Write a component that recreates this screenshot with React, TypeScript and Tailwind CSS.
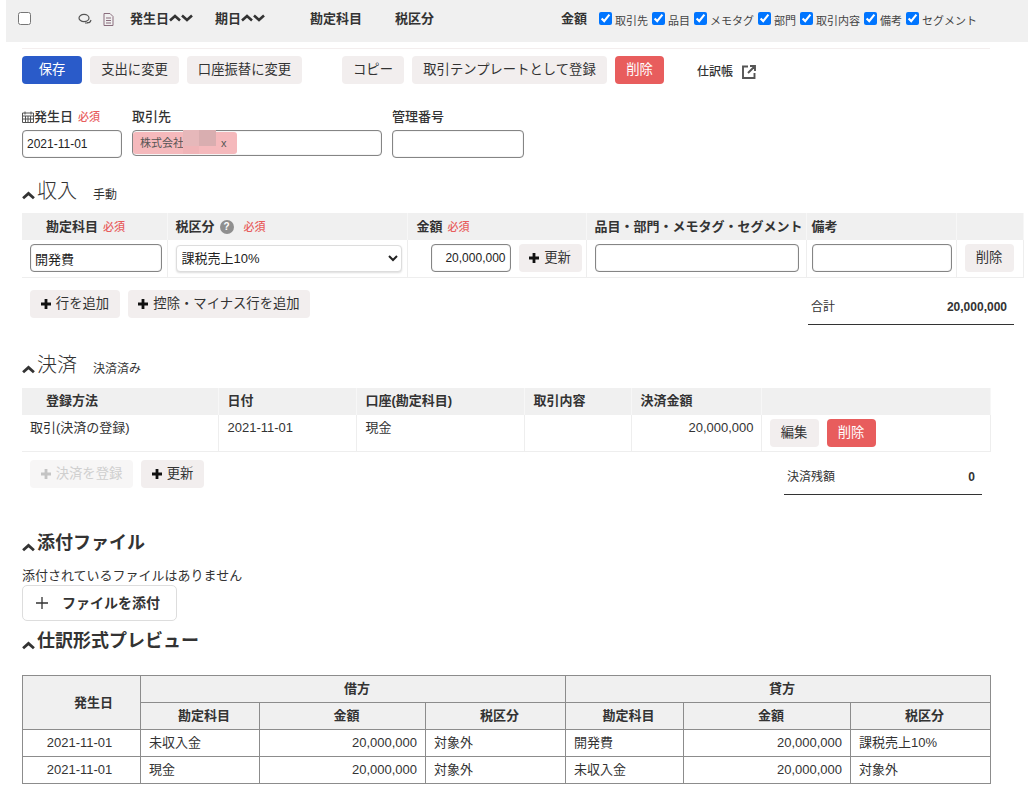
import React from "react";

function Up({ className = "" }: { className?: string }) {
  return (
    <svg viewBox="0 0 12 8" className={className} fill="none" stroke="currentColor" strokeWidth="2.6">
      <path d="M1 6.5 L6 2 L11 6.5" />
    </svg>
  );
}
function Down({ className = "" }: { className?: string }) {
  return (
    <svg viewBox="0 0 12 8" className={className} fill="none" stroke="currentColor" strokeWidth="2.6">
      <path d="M1 1.5 L6 6 L11 1.5" />
    </svg>
  );
}
function Plus({ light = false }: { light?: boolean }) {
  return (
    <svg viewBox="0 0 10 10" className="w-[10px] h-[10px] mr-[5px] shrink-0" fill={light ? "#c4c4c4" : "#111"}>
      <path d="M3.6 0h2.8v3.6H10v2.8H6.4V10H3.6V6.4H0V3.6h3.6z" />
    </svg>
  );
}
function Must({ className = "" }: { className?: string }) {
  return <span className={`text-[11px] font-medium text-[#e85d5d] ${className}`}>必須</span>;
}
function Btn({ children, className = "" }: { children: React.ReactNode; className?: string }) {
  return (
    <button className={`h-[28px] px-[11px] rounded-[4px] bg-[#f2eeee] text-[#333] text-[13.33px] inline-flex items-center justify-center whitespace-nowrap ${className}`}>
      {children}
    </button>
  );
}
function Section({ title, note, noteClass = "", bold = false, className = "" }: { title: string; note?: string; noteClass?: string; bold?: boolean; className?: string }) {
  return (
    <div className={`flex items-center text-[#333] ${className}`}>
      <Up className={`w-[13px] h-[9px] mr-[2px] ${bold ? "mt-[8px]" : "mt-[9px]"}`} />
      <span className={bold ? "text-[18px] font-bold leading-[26px]" : "text-[20px] font-light leading-[26px]"}>{title}</span>
      {note && <span className={`text-[12px] ml-[16px] ${noteClass}`}>{note}</span>}
    </div>
  );
}
const inputCls = "border border-[#858585] rounded-[4px] bg-white shadow-[inset_0_0_1px_#999] outline-none text-[#222]";

function Check({ label }: { label: string }) {
  return (
    <label className="inline-flex items-start text-[11px] text-[#444] mr-[4px]">
      <input type="checkbox" defaultChecked className="w-[13px] h-[13px] mt-[1px] mr-[3px]" />
      <span className="mt-[2px]">{label}</span>
    </label>
  );
}

const th = "bg-[#f0f0f0] text-[13px] font-bold text-[#333] text-left h-[27px] border-r border-[#f7f7f7] px-[8px]";
const td = "text-[13px] text-[#333] border-b border-r border-[#eeeeee] px-[8px]";
const jb = "border border-[#8c8c8c] bg-[#f0f0f0] text-[13px] font-bold text-[#333] text-center h-[27px] pl-[8px]";
const jd = "border border-[#8c8c8c] text-[13px] text-[#333] h-[27px] px-[8px]";
const labelRow = "h-[22px] pb-[4px] flex items-center font-medium";

export default function App() {
  return (
    <div className="w-[1028px] h-[803px] overflow-hidden bg-white text-[#333]" style={{ fontFamily: '"Liberation Sans","Noto Sans CJK JP",sans-serif' }}>
      {/* top bar */}
      <div className="ml-[6px] h-[42px] bg-[#f0f0f0] flex items-start pt-[11px] text-[13px] font-bold">
        <input type="checkbox" className="w-[13px] h-[13px] ml-[12px] mt-[1px]" />
        <svg viewBox="0 0 14 12" className="w-[14px] h-[12px] ml-[47px] mt-[2px]" fill="none" stroke="#555" strokeWidth="1.2">
          <ellipse cx="6" cy="5" rx="5" ry="3.6" />
          <path d="M9 9.5 q3 1 4-2.5 M7 10 h3" />
        </svg>
        <svg viewBox="0 0 11 13" className="w-[11px] h-[13px] ml-[11px] mt-[2px]" fill="none" stroke="#8a6d7d" strokeWidth="1">
          <path d="M1 .5h6l3 3v9H1z M3 5h5 M3 7.5h5 M3 10h5" />
        </svg>
        <span className="ml-[16px] -mt-[2px]">発生日</span>
        <Up className="w-[12px] h-[8px] mt-[3px]" />
        <Down className="w-[12px] h-[8px] mt-[3px]" />
        <span className="ml-[22px] -mt-[2px]">期日</span>
        <Up className="w-[12px] h-[8px] mt-[3px]" />
        <Down className="w-[12px] h-[8px] mt-[3px]" />
        <span className="ml-[45px] -mt-[2px]">勘定科目</span>
        <span className="ml-[33px] -mt-[2px]">税区分</span>
        <span className="ml-[127px] -mt-[2px]">金額</span>
        <div className="ml-[12px] flex font-normal">
          <Check label="取引先" />
          <Check label="品目" />
          <Check label="メモタグ" />
          <Check label="部門" />
          <Check label="取引内容" />
          <Check label="備考" />
          <Check label="セグメント" />
        </div>
      </div>

      <div className="pl-[22px]">
        <div className="w-[968px] h-px bg-[#f3eeee] mt-[6px]" />
        {/* actions */}
        <div className="flex items-center mt-[7px]">
          <Btn className="w-[60px] !bg-[#2a5bc9] !text-white">保存</Btn>
          <Btn className="ml-[8px] w-[89px]">支出に変更</Btn>
          <Btn className="ml-[8px] w-[115px]">口座振替に変更</Btn>
          <Btn className="ml-[40px] w-[62px]">コピー</Btn>
          <Btn className="ml-[8px] w-[195px]">取引テンプレートとして登録</Btn>
          <Btn className="ml-[8px] w-[49px] !bg-[#e85d5d] !text-white">削除</Btn>
          <span className="ml-[33px] mt-[3px] text-[12px] font-medium">仕訳帳</span>
          <svg viewBox="0 0 14 14" className="w-[14px] h-[14px] ml-[9px] mt-[3px]" fill="none" stroke="#555" strokeWidth="1.9">
            <path d="M6 1.5H1v11.5h11.5V8 M8 1h5v5 M13 1 6 8" />
          </svg>
        </div>

        {/* form fields */}
        <div className="flex mt-[24px] text-[13px]">
          <div className="w-[100px]">
            <div className={labelRow}>
              <svg viewBox="0 0 12 12" className="w-[12px] h-[12px]" fill="none" stroke="#555" strokeWidth="1">
                <path d="M.5 2h11v9.5H.5z M.5 5h11 M3 .5v3 M9 .5v3 M3.5 5v6.5 M6 5v6.5 M8.5 5v6.5 M.5 8h11" />
              </svg>
              <span>発生日</span>
              <Must className="ml-[5px]" />
            </div>
            <input className={`${inputCls} w-[100px] h-[28px] text-[12px] px-[4px]`} defaultValue="2021-11-01" />
          </div>
          <div className="w-[250px] ml-[10px]">
            <div className={labelRow}>取引先</div>
            <div className={`${inputCls} h-[26px] w-[250px] relative flex items-start pt-[1px]`}>
              <span className="h-[22px] w-[104px] bg-[#f5b9bc] rounded-[3px] flex items-center pl-[7px] text-[11px] text-[#555]">
                株式会社
                <span className="ml-[37px]">x</span>
              </span>
              <span className="absolute left-[50px] top-[-1px] w-[16px] h-[16px] bg-[#e6b8ba]" />
              <span className="absolute left-[66px] top-[-1px] w-[17px] h-[16px] bg-[#d9aeb0]" />
              <span className="absolute left-[50px] top-[15px] w-[16px] h-[8px] bg-[#f0b4b7]" />
            </div>
          </div>
          <div className="w-[132px] ml-[10px]">
            <div className={labelRow}>管理番号</div>
            <input className={`${inputCls} w-[132px] h-[28px]`} />
          </div>
        </div>

        {/* 収入 */}
        <Section title="収入" note="手動" noteClass="mt-[7px]" className="mt-[20px]" />
        <table className="table-fixed border-collapse w-[1001px] mt-[9px]">
          <colgroup>
            <col className="w-[145px]" />
            <col className="w-[240px]" />
            <col className="w-[179px]" />
            <col className="w-[220px]" />
            <col className="w-[150px]" />
            <col className="w-[67px]" />
          </colgroup>
          <thead>
            <tr>
              <th className={`${th} !pl-[24px]`}>勘定科目<Must className="ml-[5px]" /></th>
              <th className={th}>
                <span className="inline-flex items-center">
                  税区分
                  <span className="ml-[5px] w-[14px] h-[14px] rounded-full bg-[#8f8f8f] text-white text-[10px] flex items-center justify-center">?</span>
                  <Must className="ml-[10px] mt-[2px]" />
                </span>
              </th>
              <th className={`${th} !pl-[9px]`}>金額<Must className="ml-[5px]" /></th>
              <th className={th}><span className="whitespace-nowrap">品目・部門・メモタグ・セグメント</span></th>
              <th className={`${th} !pl-[5px]`}>備考</th>
              <th className={th}></th>
            </tr>
          </thead>
          <tbody>
            <tr className="h-[37px]">
              <td className={td}><input className={`${inputCls} w-[132px] h-[28px] px-[4px] text-[13px] block`} defaultValue="開発費" /></td>
              <td className={td}>
                <select className="w-[226px] h-[27px] border border-[#ddd] rounded-[4px] bg-white shadow-[0_1px_2px_#ddd] text-[13px] text-[#222] pl-[1px] block">
                  <option>課税売上10%</option>
                </select>
              </td>
              <td className={`${td} !pr-[4px]`}>
                <div className="flex items-center justify-end">
                  <input className={`${inputCls} w-[80px] h-[28px] text-[12px] text-right px-[4px]`} defaultValue="20,000,000" />
                  <Btn className="ml-[8px] w-[63px] !px-0"><Plus />更新</Btn>
                </div>
              </td>
              <td className={td}><input className={`${inputCls} w-[204px] h-[28px] block`} /></td>
              <td className={`${td} !pl-[5px]`}><input className={`${inputCls} w-[140px] h-[28px] block`} /></td>
              <td className={td}><Btn className="w-[49px] !px-0">削除</Btn></td>
            </tr>
          </tbody>
        </table>

        <div className="flex justify-between items-start w-[992px] mt-[12px]">
          <div className="flex ml-[8px]">
            <Btn className="w-[90px] !px-0"><Plus />行を追加</Btn>
            <Btn className="ml-[8px] w-[182px] !px-0"><Plus />控除・マイナス行を追加</Btn>
          </div>
          <div className="w-[206px] h-[35px] border-b border-[#333] flex items-center justify-between pl-[3px] pr-[7px] text-[12px] pt-[1px]">
            <span>合計</span>
            <span className="font-bold">20,000,000</span>
          </div>
        </div>

        {/* 決済 */}
        <Section title="決済" note="決済済み" noteClass="mt-[8px]" className="mt-[27px]" />
        <table className="table-fixed border-collapse w-[968px] mt-[10px]">
          <colgroup>
            <col className="w-[196px]" />
            <col className="w-[138px]" />
            <col className="w-[168px]" />
            <col className="w-[107px]" />
            <col className="w-[130px]" />
            <col className="w-[229px]" />
          </colgroup>
          <thead>
            <tr>
              <th className={`${th} !pl-[24px]`}>登録方法</th>
              <th className={`${th} !pl-[9px]`}>日付</th>
              <th className={`${th} !pl-[9px]`}>口座(勘定科目)</th>
              <th className={`${th} !pl-[9px]`}>取引内容</th>
              <th className={`${th} !pl-[9px]`}>決済金額</th>
              <th className={th}></th>
            </tr>
          </thead>
          <tbody>
            <tr className="h-[37px]">
              <td className={`${td} align-top pt-[3px]`}>取引(決済の登録)</td>
              <td className={`${td} align-top pt-[3px] !pl-[9px]`}>2021-11-01</td>
              <td className={`${td} align-top pt-[3px] !pl-[9px]`}>現金</td>
              <td className={td}></td>
              <td className={`${td} align-top pt-[3px] text-right !pr-[7px]`}>20,000,000</td>
              <td className={`${td} align-top pt-[4px]`}>
                <div className="flex">
                  <Btn className="w-[49px] !px-0">編集</Btn>
                  <Btn className="ml-[8px] w-[49px] !px-0 !bg-[#e85d5d] !text-white">削除</Btn>
                </div>
              </td>
            </tr>
          </tbody>
        </table>

        <div className="flex justify-between items-start w-[960px] mt-[8px]">
          <div className="flex ml-[8px]">
            <Btn className="w-[103px] !px-0 !bg-[#f7f6f6] !text-[#cfcfcf]"><Plus light />決済を登録</Btn>
            <Btn className="ml-[8px] w-[63px] !px-0"><Plus />更新</Btn>
          </div>
          <div className="w-[198px] h-[35px] border-b border-[#333] flex items-center justify-between pl-[3px] pr-[7px] text-[12px]">
            <span>決済残額</span>
            <span className="font-bold">0</span>
          </div>
        </div>

        {/* 添付 */}
        <Section title="添付ファイル" bold className="mt-[35px]" />
        <div className="text-[13px] leading-[18px] mt-[11px]">添付されているファイルはありません</div>
        <button className="w-[155px] h-[36px] border border-[#ddd] rounded-[5px] bg-white flex items-center pl-[13px] text-[14px] font-bold text-[#333]">
          <svg viewBox="0 0 12 12" className="w-[12px] h-[12px] mr-[14px]" stroke="#333" strokeWidth="1.3"><path d="M6 0v12M0 6h12" /></svg>
          ファイルを添付
        </button>
        <Section title="仕訳形式プレビュー" bold className="mt-[7px]" />

        <table className="table-fixed border-collapse w-[968px] mt-[21px]">
          <colgroup>
            <col className="w-[118px]" />
            <col className="w-[119px]" />
            <col className="w-[166px]" />
            <col className="w-[140px]" />
            <col className="w-[118px]" />
            <col className="w-[167px]" />
            <col className="w-[140px]" />
          </colgroup>
          <thead>
            <tr>
              <th rowSpan={2} className={`${jb} !pl-[24px]`}>発生日</th>
              <th colSpan={3} className={jb}>借方</th>
              <th colSpan={3} className={jb}>貸方</th>
            </tr>
            <tr>
              <th className={jb}>勘定科目</th>
              <th className={jb}>金額</th>
              <th className={jb}>税区分</th>
              <th className={jb}>勘定科目</th>
              <th className={jb}>金額</th>
              <th className={jb}>税区分</th>
            </tr>
          </thead>
          <tbody>
            <tr>
              <td className={`${jd} text-center !pr-[12px]`}>2021-11-01</td>
              <td className={jd}>未収入金</td>
              <td className={`${jd} text-right`}>20,000,000</td>
              <td className={jd}>対象外</td>
              <td className={jd}>開発費</td>
              <td className={`${jd} text-right`}>20,000,000</td>
              <td className={jd}>課税売上10%</td>
            </tr>
            <tr>
              <td className={`${jd} text-center !pr-[12px]`}>2021-11-01</td>
              <td className={jd}>現金</td>
              <td className={`${jd} text-right`}>20,000,000</td>
              <td className={jd}>対象外</td>
              <td className={jd}>未収入金</td>
              <td className={`${jd} text-right`}>20,000,000</td>
              <td className={jd}>対象外</td>
            </tr>
          </tbody>
        </table>
      </div>
    </div>
  );
}
